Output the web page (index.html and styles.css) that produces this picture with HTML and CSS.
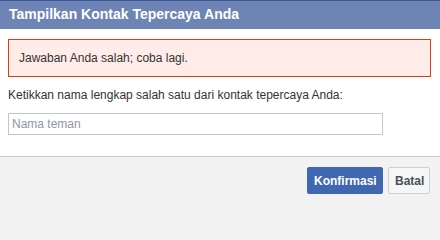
FILE: index.html
```html
<!DOCTYPE html>
<html lang="id">
<head>
<meta charset="utf-8">
<title>Tampilkan Kontak Tepercaya Anda</title>
<link rel="stylesheet" href="styles.css">
</head>
<body>
<div class="dialog">
  <div class="header">Tampilkan Kontak Tepercaya Anda</div>
  <div class="content">
    <div class="error">Jawaban Anda salah; coba lagi.</div>
    <div class="label">Ketikkan nama lengkap salah satu dari kontak tepercaya Anda:</div>
    <input class="field" type="text" placeholder="Nama teman">
  </div>
  <div class="footer">
    <button class="btn primary">Konfirmasi</button>
    <button class="btn secondary">Batal</button>
  </div>
</div>
</body>
</html>
```
FILE: styles.css
```css
html, body {
  margin: 0;
  padding: 0;
  background: #ffffff;
}
body {
  font-family: "Liberation Sans", Arial, sans-serif;
  font-size: 12px;
  color: #1d2129;
}
.dialog {
  width: 440px;
  min-height: 100vh;
  display: flex;
  flex-direction: column;
}
.header {
  box-sizing: border-box;
  height: 29px;
  border-top: 1px solid #3b5998;
  background: #6d84b4;
  color: #ffffff;
  font-size: 14px;
  font-weight: bold;
  line-height: 27px;
  padding-left: 9px;
}
.content {
  padding: 10px 9px 21px 8px;
  display: flex;
  flex-direction: column;
}
.error {
  box-sizing: border-box;
  height: 38px;
  border: 1px solid #dd3c10;
  background: #ffebe8;
  padding-left: 10px;
  line-height: 36px;
  color: #333333;
}
.label {
  margin-top: 10px;
  line-height: 16px;
  color: #333333;
}
.field {
  box-sizing: border-box;
  margin-top: 10px;
  width: 375px;
  height: 22px;
  border: 1px solid #bdc7d8;
  padding: 0 3px;
  font-family: "Liberation Sans", Arial, sans-serif;
  font-size: 12px;
  color: #333;
  outline: none;
}
.field::placeholder {
  color: #9197a3;
}
.footer {
  flex: 1;
  border-top: 1px solid #cccccc;
  background: #f2f2f2;
  display: flex;
  justify-content: flex-end;
  align-items: flex-start;
  gap: 5px;
  padding: 10px 10px 0 0;
}
.btn {
  box-sizing: border-box;
  height: 27px;
  border-radius: 2px;
  font-family: "Liberation Sans", Arial, sans-serif;
  font-size: 12px;
  font-weight: bold;
  padding: 0 6px;
  cursor: pointer;
}
.primary {
  width: 76px;
  background: #4267b2;
  border: 1px solid #4267b2;
  color: #ffffff;
}
.secondary {
  width: 42px;
  background: #f5f6f7;
  border: 1px solid #ced0d4;
  color: #4b4f56;
}
```
